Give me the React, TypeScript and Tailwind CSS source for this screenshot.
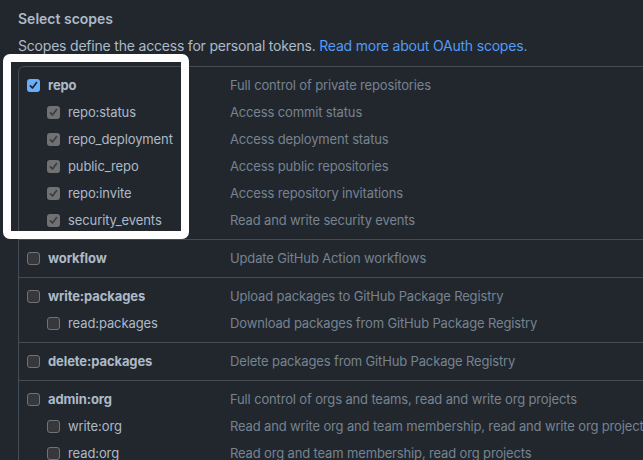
import React from "react";

type Row = { name: string; desc: string; sub?: boolean; state: "blue" | "gray" | "off" };

const groups: Row[][] = [
  [
    { name: "repo", desc: "Full control of private repositories", state: "blue" },
    { name: "repo:status", desc: "Access commit status", sub: true, state: "gray" },
    { name: "repo_deployment", desc: "Access deployment status", sub: true, state: "gray" },
    { name: "public_repo", desc: "Access public repositories", sub: true, state: "gray" },
    { name: "repo:invite", desc: "Access repository invitations", sub: true, state: "gray" },
    { name: "security_events", desc: "Read and write security events", sub: true, state: "gray" },
  ],
  [{ name: "workflow", desc: "Update GitHub Action workflows", state: "off" }],
  [
    { name: "write:packages", desc: "Upload packages to GitHub Package Registry", state: "off" },
    { name: "read:packages", desc: "Download packages from GitHub Package Registry", sub: true, state: "off" },
  ],
  [{ name: "delete:packages", desc: "Delete packages from GitHub Package Registry", state: "off" }],
  [
    { name: "admin:org", desc: "Full control of orgs and teams, read and write org projects", state: "off" },
    { name: "write:org", desc: "Read and write org and team membership, read and write org projects", sub: true, state: "off" },
    { name: "read:org", desc: "Read org and team membership, read org projects", sub: true, state: "off" },
  ],
];

function Box({ state }: { state: Row["state"] }) {
  if (state === "off") {
    return <span className="block w-[13px] h-[13px] rounded-[3px] bg-[#36383c] border border-[#707277]" />;
  }
  const bg = state === "blue" ? "bg-[#6aaefa]" : "bg-[#707173]";
  const stroke = state === "blue" ? "#1d2430" : "#3c3d40";
  return (
    <span className={`flex items-center justify-center w-[13px] h-[13px] rounded-[3px] ${bg}`}>
      <svg width="9" height="9" viewBox="0 0 9 9">
        <path d="M1.4 4.8 L3.5 7 L7.6 1.6" fill="none" stroke={stroke} strokeWidth="1.7" strokeLinecap="round" strokeLinejoin="round" />
      </svg>
    </span>
  );
}

export default function App() {
  return (
    <div
      className="relative w-[643px] h-[460px] overflow-hidden bg-[#22272e] pl-[18px] pt-[9px]"
      style={{ fontFamily: "Inter, 'Noto Sans', sans-serif" }}
    >
      <div className="text-[14px] leading-[20px] font-semibold text-[#adbac7]">Select scopes</div>
      <div className="mt-[7px] text-[14px] leading-[20px] tracking-[-0.2px] text-[#adbac7] whitespace-nowrap">
        Scopes define the access for personal tokens. <span className="text-[#539bf5]">Read more about OAuth scopes.</span>
      </div>
      <div className="mt-[10px] w-[720px] border border-[#444c56] rounded-[6px]">
        {groups.map((g, gi) => (
          <div key={gi} className={`py-[5px] ${gi > 0 ? "border-t border-[#444c56]" : ""}`}>
            {g.map((r) => (
              <div key={r.name} className="flex items-center h-[27px] text-[13px] whitespace-nowrap">
                <div className={`flex items-center w-[211px] ${r.sub ? "pl-[28px]" : "pl-[8px]"}`}>
                  <Box state={r.state} />
                  <span className={`ml-[8px] text-[#adbac7] tracking-[-0.1px] ${r.sub ? "" : "font-bold"}`}>{r.name}</span>
                </div>
                <div className="text-[#768390] tracking-[-0.15px]">{r.desc}</div>
              </div>
            ))}
          </div>
        ))}
      </div>
      <div className="absolute left-[3px] top-[54px] w-[186px] h-[185px] border-[8px] border-white rounded-[7px]" />
    </div>
  );
}
